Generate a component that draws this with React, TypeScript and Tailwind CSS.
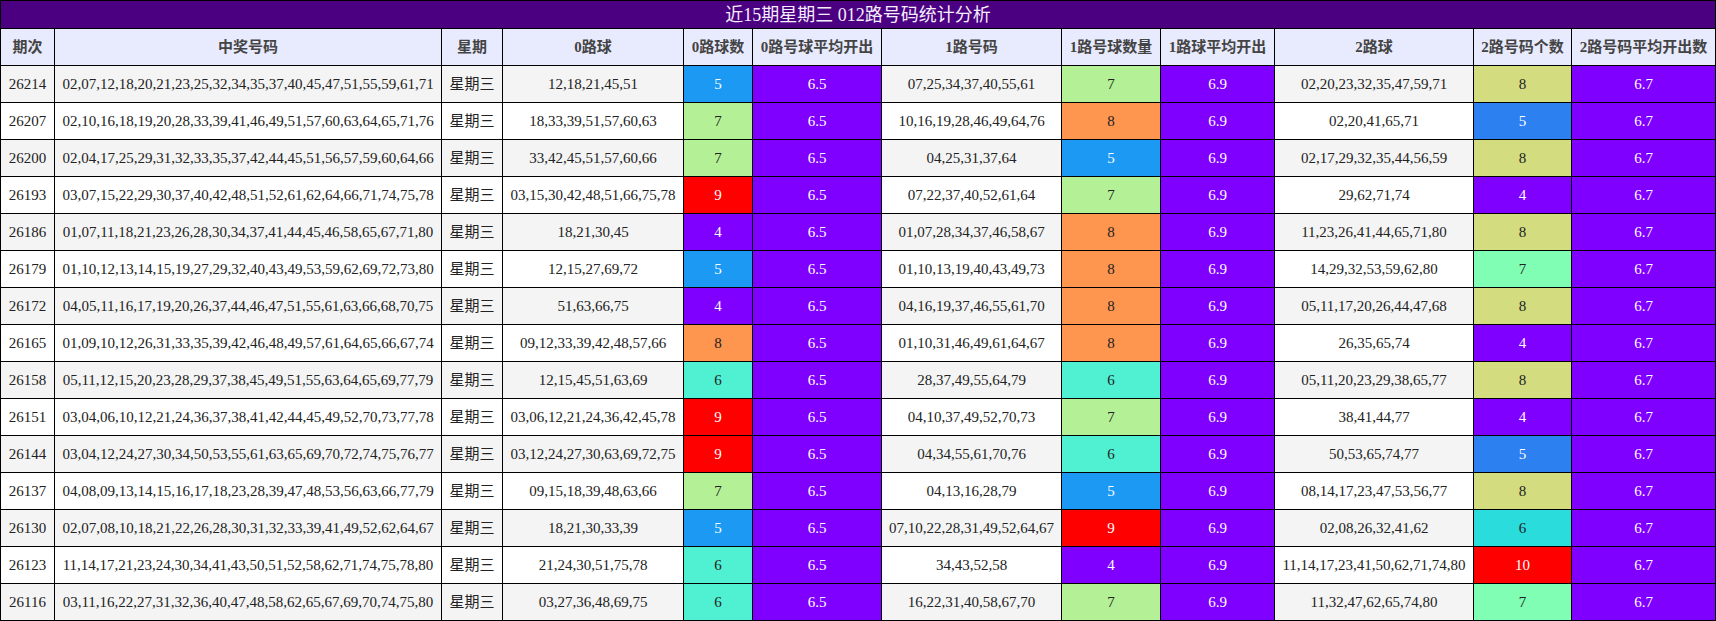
const headers = [
  "期次",
  "中奖号码",
  "星期",
  "0路球",
  "0路球数",
  "0路号球平均开出",
  "1路号码",
  "1路号球数量",
  "1路球平均开出",
  "2路球",
  "2路号码个数",
  "2路号码平均开出数",
];

const widths = [54, 387, 61, 181, 69, 129, 180, 99, 114, 199, 98, 144];

type Row = [string, string, string, number, string, number, string, number];

const rows: Row[] = [
  ["26214", "02,07,12,18,20,21,23,25,32,34,35,37,40,45,47,51,55,59,61,71", "12,18,21,45,51", 5, "07,25,34,37,40,55,61", 7, "02,20,23,32,35,47,59,71", 8],
  ["26207", "02,10,16,18,19,20,28,33,39,41,46,49,51,57,60,63,64,65,71,76", "18,33,39,51,57,60,63", 7, "10,16,19,28,46,49,64,76", 8, "02,20,41,65,71", 5],
  ["26200", "02,04,17,25,29,31,32,33,35,37,42,44,45,51,56,57,59,60,64,66", "33,42,45,51,57,60,66", 7, "04,25,31,37,64", 5, "02,17,29,32,35,44,56,59", 8],
  ["26193", "03,07,15,22,29,30,37,40,42,48,51,52,61,62,64,66,71,74,75,78", "03,15,30,42,48,51,66,75,78", 9, "07,22,37,40,52,61,64", 7, "29,62,71,74", 4],
  ["26186", "01,07,11,18,21,23,26,28,30,34,37,41,44,45,46,58,65,67,71,80", "18,21,30,45", 4, "01,07,28,34,37,46,58,67", 8, "11,23,26,41,44,65,71,80", 8],
  ["26179", "01,10,12,13,14,15,19,27,29,32,40,43,49,53,59,62,69,72,73,80", "12,15,27,69,72", 5, "01,10,13,19,40,43,49,73", 8, "14,29,32,53,59,62,80", 7],
  ["26172", "04,05,11,16,17,19,20,26,37,44,46,47,51,55,61,63,66,68,70,75", "51,63,66,75", 4, "04,16,19,37,46,55,61,70", 8, "05,11,17,20,26,44,47,68", 8],
  ["26165", "01,09,10,12,26,31,33,35,39,42,46,48,49,57,61,64,65,66,67,74", "09,12,33,39,42,48,57,66", 8, "01,10,31,46,49,61,64,67", 8, "26,35,65,74", 4],
  ["26158", "05,11,12,15,20,23,28,29,37,38,45,49,51,55,63,64,65,69,77,79", "12,15,45,51,63,69", 6, "28,37,49,55,64,79", 6, "05,11,20,23,29,38,65,77", 8],
  ["26151", "03,04,06,10,12,21,24,36,37,38,41,42,44,45,49,52,70,73,77,78", "03,06,12,21,24,36,42,45,78", 9, "04,10,37,49,52,70,73", 7, "38,41,44,77", 4],
  ["26144", "03,04,12,24,27,30,34,50,53,55,61,63,65,69,70,72,74,75,76,77", "03,12,24,27,30,63,69,72,75", 9, "04,34,55,61,70,76", 6, "50,53,65,74,77", 5],
  ["26137", "04,08,09,13,14,15,16,17,18,23,28,39,47,48,53,56,63,66,77,79", "09,15,18,39,48,63,66", 7, "04,13,16,28,79", 5, "08,14,17,23,47,53,56,77", 8],
  ["26130", "02,07,08,10,18,21,22,26,28,30,31,32,33,39,41,49,52,62,64,67", "18,21,30,33,39", 5, "07,10,22,28,31,49,52,64,67", 9, "02,08,26,32,41,62", 6],
  ["26123", "11,14,17,21,23,24,30,34,41,43,50,51,52,58,62,71,74,75,78,80", "21,24,30,51,75,78", 6, "34,43,52,58", 4, "11,14,17,23,41,50,62,71,74,80", 10],
  ["26116", "03,11,16,22,27,31,32,36,40,47,48,58,62,65,67,69,70,74,75,80", "03,27,36,48,69,75", 6, "16,22,31,40,58,67,70", 7, "11,32,47,62,65,74,80", 7],
];

// colour of count cells in the 0 / 1 road columns
function countClass(n: number) {
  switch (n) {
    case 4:
      return "bg-[#8000ff] text-white";
    case 5:
      return "bg-[#1c99f3] text-white";
    case 6:
      return "bg-[#50f0d2] text-[#222]";
    case 7:
      return "bg-[#b4f096] text-[#222]";
    case 8:
      return "bg-[#ff9650] text-[#222]";
    default:
      return "bg-[#ff0000] text-white";
  }
}

// the 2 road column uses its own palette
function count2Class(n: number) {
  switch (n) {
    case 4:
      return "bg-[#8000ff] text-white";
    case 5:
      return "bg-[#2d80f0] text-white";
    case 6:
      return "bg-[#2adcdc] text-[#222]";
    case 7:
      return "bg-[#80ffb4] text-[#222]";
    case 8:
      return "bg-[#d4dc80] text-[#222]";
    default:
      return "bg-[#ff0000] text-white";
  }
}

const td = "border border-black text-center align-middle p-0 h-[37px] whitespace-nowrap";

export default function App() {
  return (
    <div className="w-[1716px] bg-white font-['Liberation_Serif','Noto_Sans_CJK_SC',serif] text-[15px] text-[#222]">
      <table className="w-[1716px] table-fixed border-collapse">
        <colgroup>
          {widths.map((w, i) => (
            <col key={i} style={{ width: w }} />
          ))}
        </colgroup>
        <thead>
          <tr>
            <th
              colSpan={12}
              className="border border-black bg-[#4b0082] h-[28px] p-0 text-center text-[18px] font-normal text-[#f4eefc] leading-none"
            >
              近15期星期三 012路号码统计分析
            </th>
          </tr>
          <tr>
            {headers.map((h) => (
              <th
                key={h}
                className="border border-black bg-[#e8eafd] h-[37px] p-0 text-center font-bold text-[#444] whitespace-nowrap"
              >
                {h}
              </th>
            ))}
          </tr>
        </thead>
        <tbody>
          {rows.map((r, i) => {
            const bg = i % 2 === 0 ? "bg-[#f4f4f4]" : "bg-white";
            return (
              <tr key={r[0]}>
                <td className={`${td} ${bg}`}>{r[0]}</td>
                <td className={`${td} ${bg}`}>{r[1]}</td>
                <td className={`${td} ${bg}`}>星期三</td>
                <td className={`${td} ${bg}`}>{r[2]}</td>
                <td className={`${td} ${countClass(r[3])}`}>{r[3]}</td>
                <td className={`${td} bg-[#8000ff] text-white`}>6.5</td>
                <td className={`${td} ${bg}`}>{r[4]}</td>
                <td className={`${td} ${countClass(r[5])}`}>{r[5]}</td>
                <td className={`${td} bg-[#8000ff] text-white`}>6.9</td>
                <td className={`${td} ${bg}`}>{r[6]}</td>
                <td className={`${td} ${count2Class(r[7])}`}>{r[7]}</td>
                <td className={`${td} bg-[#8000ff] text-white`}>6.7</td>
              </tr>
            );
          })}
        </tbody>
      </table>
    </div>
  );
}
